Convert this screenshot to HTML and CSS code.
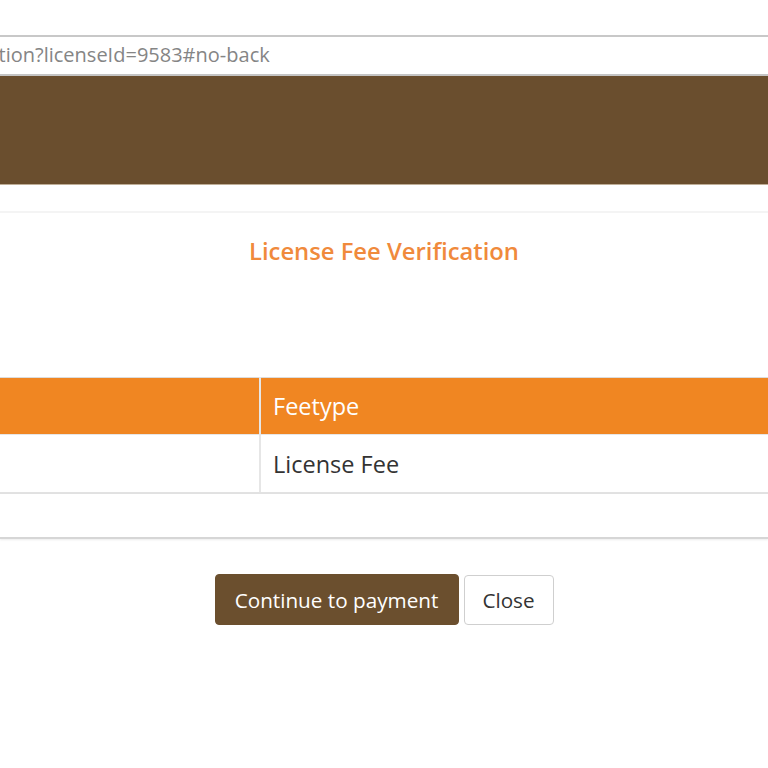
FILE: index.html
```html
<!DOCTYPE html>
<html>
<head>
<meta charset="utf-8">
<link rel="stylesheet" href="styles.css">
</head>
<body>
<div class="top"></div>
<div class="urlbar"><span class="url">ction?licenseId=9583#no-back</span></div>
<div class="banner"></div>
<div class="spacer"></div>
<div class="modal">
  <h2 class="title">License Fee Verification</h2>
  <table class="fees">
    <thead>
      <tr><th class="c1"></th><th>Feetype</th></tr>
    </thead>
    <tbody>
      <tr><td class="c1"></td><td>License Fee</td></tr>
    </tbody>
  </table>
  <div class="tail"></div>
  <div class="actions">
    <button class="btn primary">Continue to payment</button>
    <button class="btn plain">Close</button>
  </div>
</div>
</body>
</html>
```
FILE: styles.css
```css
html, body {
  margin: 0;
  padding: 0;
  background: #fff;
  font-family: "Open Sans", "Liberation Sans", sans-serif;
  overflow: hidden;
}
.top {
  height: 35px;
}
.urlbar {
  height: 37px;
  border-top: 2px solid #c8c8c8;
  border-bottom: 2px solid #c4c4c4;
  display: flex;
  align-items: center;
  overflow: hidden;
  white-space: nowrap;
}
.url {
  font-size: 20px;
  line-height: 24px;
  color: #858585;
  margin-left: -11px;
  margin-top: -2px;
}
.banner {
  height: 108px;
  background: #6a4e2e;
  border-bottom: 1px solid #bfae97;
}
.spacer {
  height: 26px;
  border-bottom: 2px solid #f4f4f4;
}
.modal {
  display: flex;
  flex-direction: column;
}
.title {
  margin: 21px 0 0;
  height: 143px;
  text-align: center;
  font-size: 23.8px;
  font-weight: 600;
  color: #f08a3c;
  line-height: 34px;
}
.fees {
  width: 100%;
  border-collapse: collapse;
  border-top: 1px solid #dcdcdc;
  font-size: 23.5px;
}
.fees th, .fees td {
  text-align: left;
  padding: 0 0 0 12px;
  height: 56px;
  font-weight: 400;
}
.fees th {
  background: #f08622;
  color: #fff;
  border-bottom: 1px solid #e6e6e6;
}
.fees td {
  color: #333;
  height: 57px;
  border-bottom: 2px solid #e2e2e2;
}
.fees .c1 {
  width: 247px;
  border-right: 2px solid #e6e6e6;
}
.tail {
  height: 43px;
  border-bottom: 2px solid #d6d6d6;
  box-shadow: 0 1px 2px rgba(0,0,0,0.08);
}
.actions {
  display: flex;
  justify-content: center;
  gap: 5px;
  padding: 35px 0 0 0;
}
.btn {
  font-family: "Open Sans", "Liberation Sans", sans-serif;
  font-size: 20.7px;
  height: 51px;
  border-radius: 4px;
  padding: 0;
  cursor: pointer;
}
.primary {
  background: #6b4f2e;
  color: #fff;
  border: 1px solid #6b4f2e;
  width: 244px;
}
.plain {
  background: #fff;
  color: #333;
  border: 1px solid #cfcfcf;
  width: 90px;
  height: 50px;
  margin-top: 1px;
}
```
